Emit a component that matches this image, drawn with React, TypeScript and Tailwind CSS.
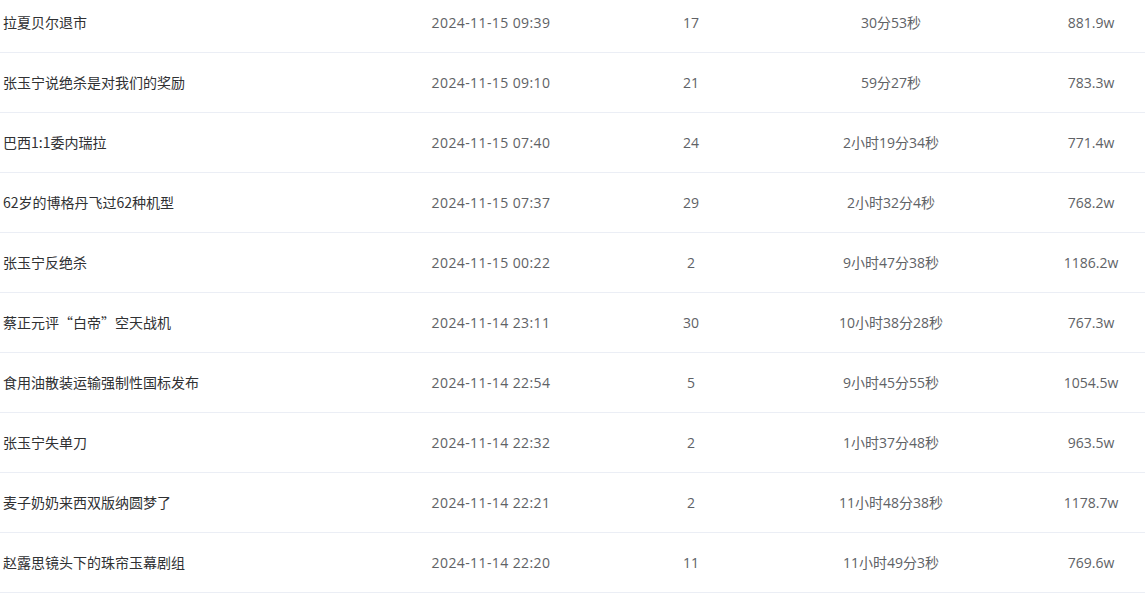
import React from "react";

const rows = [
  ["拉夏贝尔退市", "2024-11-15 09:39", "17", "30分53秒", "881.9w"],
  ["张玉宁说绝杀是对我们的奖励", "2024-11-15 09:10", "21", "59分27秒", "783.3w"],
  ["巴西1:1委内瑞拉", "2024-11-15 07:40", "24", "2小时19分34秒", "771.4w"],
  ["62岁的博格丹飞过62种机型", "2024-11-15 07:37", "29", "2小时32分4秒", "768.2w"],
  ["张玉宁反绝杀", "2024-11-15 00:22", "2", "9小时47分38秒", "1186.2w"],
  ["蔡正元评“白帝”空天战机", "2024-11-14 23:11", "30", "10小时38分28秒", "767.3w"],
  ["食用油散装运输强制性国标发布", "2024-11-14 22:54", "5", "9小时45分55秒", "1054.5w"],
  ["张玉宁失单刀", "2024-11-14 22:32", "2", "1小时37分48秒", "963.5w"],
  ["麦子奶奶来西双版纳圆梦了", "2024-11-14 22:21", "2", "11小时48分38秒", "1178.7w"],
  ["赵露思镜头下的珠帘玉幕剧组", "2024-11-14 22:20", "11", "11小时49分3秒", "769.6w"],
];

export default function App() {
  return (
    <div
      className="w-[1145px] h-[596px] overflow-hidden bg-white text-[14px]"
      style={{ fontFamily: '"Open Sans", "Noto Sans CJK SC", sans-serif' }}
    >
      <div className="-mt-[7px] w-[1191px]">
        {rows.map((r, i) => (
          <div key={i} className="flex h-[60px] items-center border-b border-[#ebeef5]">
            <div
              className="w-[391px] pl-[3px] text-[#303133] whitespace-nowrap"
              style={{ fontFamily: '"Noto Sans CJK SC", sans-serif' }}
            >
              {r[0]}
            </div>
            <div className="w-[200px] text-center text-[#606266] tracking-[0.4px]">{r[1]}</div>
            <div className="w-[200px] text-center text-[#606266]">{r[2]}</div>
            <div className="w-[200px] text-center text-[#606266]">{r[3]}</div>
            <div className="w-[200px] text-center text-[#606266]">{r[4]}</div>
          </div>
        ))}
      </div>
    </div>
  );
}
